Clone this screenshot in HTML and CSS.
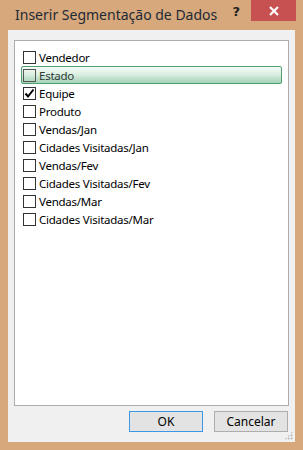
FILE: index.html
```html
<!DOCTYPE html>
<html lang="pt-BR">
<head>
  <meta charset="UTF-8" />
  <title>Inserir Segmentação de Dados</title>
  <link rel="stylesheet" href="styles.css">
</head>
<body>
  <div class="window">
    <div class="titlebar">
      <div class="title">Inserir Segmentação de Dados</div>
      <div class="help">?</div>
      <div class="close">
        <svg width="10" height="10" viewBox="0 0 10 10">
          <path d="M1 1 L9 9 M9 1 L1 9" stroke="#fff" stroke-width="2.2" />
        </svg>
      </div>
    </div>

    <div class="client">
      <div class="fields">
        <div class="field"><span class="box"></span>Vendedor</div>
        <div class="field hover"><span class="box"></span>Estado</div>
        <div class="field">
          <span class="box checked">
            <svg width="11" height="11" viewBox="0 0 11 11">
              <path d="M1.5 5.5 L4 8.5 L9.5 1.5" fill="none" stroke="#000" stroke-width="2" />
            </svg>
          </span>Equipe
        </div>
        <div class="field"><span class="box"></span>Produto</div>
        <div class="field"><span class="box"></span>Vendas/Jan</div>
        <div class="field"><span class="box"></span>Cidades Visitadas/Jan</div>
        <div class="field"><span class="box"></span>Vendas/Fev</div>
        <div class="field"><span class="box"></span>Cidades Visitadas/Fev</div>
        <div class="field"><span class="box"></span>Vendas/Mar</div>
        <div class="field"><span class="box"></span>Cidades Visitadas/Mar</div>
      </div>

      <div class="button-row">
        <button class="default">OK</button>
        <button>Cancelar</button>
      </div>
      <div class="grip"></div>
    </div>
  </div>
</body>
</html>
```

FILE: styles.css
```css
body {
  margin: 0;
  font-family: "Noto Sans", "Open Sans", sans-serif;
  background: #d6a87c;
}

.window {
  width: 303px;
  height: 450px;
  display: flex;
  flex-direction: column;
}

.titlebar {
  height: 30px;
  display: flex;
  align-items: flex-start;
}

.title {
  flex: 1;
  padding: 5px 0 0 15px;
  font-family: "Noto Sans", sans-serif;
  font-size: 14px;
  color: #1f2a36;
}

.help {
  margin: 4px 11px 0 0;
  font-family: "DejaVu Sans", sans-serif;
  font-weight: bold;
  font-size: 13px;
  color: #222;
}

.close {
  width: 45px;
  height: 21px;
  margin-right: 7px;
  background: #c75050;
  display: flex;
  align-items: center;
  justify-content: center;
}

.client {
  position: relative;
  flex: 1;
  margin: 0 8px 8px 8px;
  background: #f0f0f0;
  padding: 10px 6px 0 6px;
  display: flex;
  flex-direction: column;
}

.fields {
  height: 366px;
  box-sizing: border-box;
  border: 1px solid #acacac;
  background: #fff;
  padding: 7px 6px 0 6px;
}

.field {
  height: 18px;
  box-sizing: border-box;
  border: 1px solid transparent;
  border-radius: 2px;
  padding-left: 1px;
  display: flex;
  align-items: center;
  font-size: 11.5px;
  letter-spacing: -0.25px;
  color: #000;
}

.field.hover {
  border-color: #4f9f70;
  background: linear-gradient(to bottom, #f6fbf8, #dcefe3 45%, #a5d2b7);
  color: #2b3a33;
}

.box {
  width: 13px;
  height: 13px;
  box-sizing: border-box;
  border: 1px solid #333;
  background: #fff;
  margin: 0 3px 0 0;
  display: flex;
  align-items: center;
  justify-content: center;
}

.field.hover .box {
  background: transparent;
  border-color: #555;
}

.box.checked svg {
  display: block;
}

.button-row {
  display: flex;
  justify-content: flex-end;
  gap: 11px;
  margin-top: 5px;
  padding-right: 1px;
}

button {
  width: 74px;
  height: 21px;
  font-family: "Noto Sans", sans-serif;
  font-size: 12px;
  color: #000;
  background: #e3e3e3;
  border: 1px solid #adadad;
  padding: 0;
}

button.default {
  border-color: #3c98e6;
}

.grip {
  position: absolute;
  right: 2px;
  bottom: 2px;
  width: 9px;
  height: 9px;
  background:
    radial-gradient(circle, #bdbdbd 45%, transparent 50%) 0 0 / 3px 3px;
  clip-path: polygon(100% 0, 100% 100%, 0 100%);
}
```
